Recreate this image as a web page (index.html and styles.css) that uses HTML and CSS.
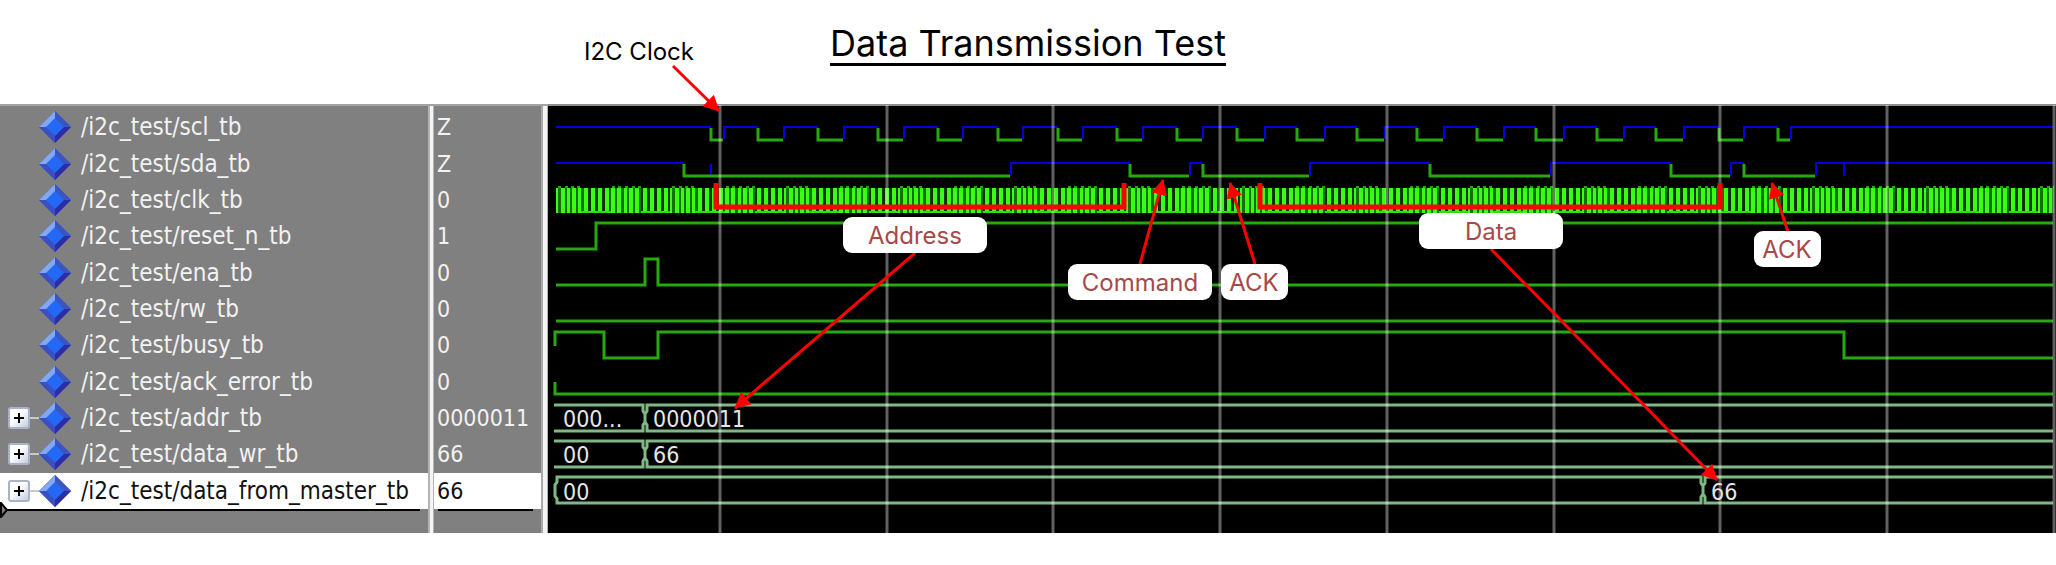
FILE: index.html
```html
<!DOCTYPE html>
<html lang="en">
<head>
<meta charset="utf-8">
<title>Data Transmission Test</title>
<link rel="stylesheet" href="styles.css">
</head>
<body>
<svg class="defs" width="0" height="0" aria-hidden="true">
  <symbol id="gem" viewBox="0 0 32 32">
    <path fill="#3b57c8" d="M16 0 32 16 16 32 0 16Z"/>
    <path fill="#82a8f4" d="M16 0V8L8 16H0Z"/>
    <path fill="#3a55bf" d="M16 0 32 16H24L16 8Z"/>
    <path fill="#3a4fc0" d="M0 16H8L16 24V32Z"/>
    <path fill="#2c2ca4" d="M32 16H24L16 24V32Z"/>
    <path fill="#2468f6" d="M16 7 25 16 16 25 7 16Z"/>
  </symbol>
</svg>
<header class="header"><h1 class="title">Data Transmission Test</h1></header>
<main class="viewer">
  <section class="signals">
    <table class="signal-table">
      <tbody>
        <tr><td class="name"><div class="cell"><span class="tree"></span><svg class="gem"><use href="#gem"/></svg><span>/i2c_test/scl_tb</span></div></td><td class="value">Z</td></tr>
        <tr><td class="name"><div class="cell"><span class="tree"></span><svg class="gem"><use href="#gem"/></svg><span>/i2c_test/sda_tb</span></div></td><td class="value">Z</td></tr>
        <tr><td class="name"><div class="cell"><span class="tree"></span><svg class="gem"><use href="#gem"/></svg><span>/i2c_test/clk_tb</span></div></td><td class="value">0</td></tr>
        <tr><td class="name"><div class="cell"><span class="tree"></span><svg class="gem"><use href="#gem"/></svg><span>/i2c_test/reset_n_tb</span></div></td><td class="value">1</td></tr>
        <tr><td class="name"><div class="cell"><span class="tree"></span><svg class="gem"><use href="#gem"/></svg><span>/i2c_test/ena_tb</span></div></td><td class="value">0</td></tr>
        <tr><td class="name"><div class="cell"><span class="tree"></span><svg class="gem"><use href="#gem"/></svg><span>/i2c_test/rw_tb</span></div></td><td class="value">0</td></tr>
        <tr><td class="name"><div class="cell"><span class="tree"></span><svg class="gem"><use href="#gem"/></svg><span>/i2c_test/busy_tb</span></div></td><td class="value">0</td></tr>
        <tr><td class="name"><div class="cell"><span class="tree"></span><svg class="gem"><use href="#gem"/></svg><span>/i2c_test/ack_error_tb</span></div></td><td class="value">0</td></tr>
        <tr><td class="name"><div class="cell"><span class="tree"><button class="expand" aria-label="Expand addr_tb"></button></span><svg class="gem"><use href="#gem"/></svg><span>/i2c_test/addr_tb</span></div></td><td class="value">0000011</td></tr>
        <tr><td class="name"><div class="cell"><span class="tree"><button class="expand" aria-label="Expand data_wr_tb"></button></span><svg class="gem"><use href="#gem"/></svg><span>/i2c_test/data_wr_tb</span></div></td><td class="value">66</td></tr>
        <tr class="selected"><td class="name"><div class="cell"><span class="tree"><button class="expand" aria-label="Expand data_from_master_tb"></button></span><svg class="gem"><use href="#gem"/></svg><span>/i2c_test/data_from_master_tb</span></div></td><td class="value">66</td></tr>
      </tbody>
    </table>
    <div class="insertion">
      <svg class="marker" viewBox="0 0 8 16"><path d="M1 1 7 8 1 15Z"/></svg>
      <span class="rule rule-name"></span><span class="rule rule-value"></span>
    </div>
  </section>
  <section class="wave">
    <svg class="plot" viewBox="548 104 1508 429">
      <defs>
        <pattern id="clock" x="556" y="184" width="114" height="30" patternUnits="userSpaceOnUse">
          <path fill="#176e09" d="M0 4H28V29H0ZM54 4H85V29H54Z"/>
          <path fill="#093303" d="M28 4H54V29H28ZM85 4H114V29H85Z"/>
          <path fill="#38ff14" d="M0 4h2v25h-2zM5 4h4v25h-4zM11 4h3v25h-3zM16 4h4v25h-4zM22 4h3v25h-3zM28 4h4v25h-4zM35 4h4v25h-4zM42 4h4v25h-4zM49 4h4v25h-4zM55 4h4v25h-4zM61 4h4v25h-4zM68 4h3v25h-3zM73 4h4v25h-4zM79 4h4v25h-4zM87 4h4v25h-4zM94 4h4v25h-4zM101 4h4v25h-4zM108 4h4v25h-4z"/>
          <path fill="#22a50d" d="M2 2h3v2h-3zM9 2h3v2h-3zM15 2h3v2h-3zM21 2h3v2h-3zM56 2h3v2h-3zM62 2h3v2h-3zM69 2h3v2h-3zM76 2h3v2h-3zM82 2h3v2h-3z"/>
          <path fill="#2ee010" d="M25 27H55V29H25ZM85 27H114V29H85Z"/>
        </pattern>
        <marker id="head" viewBox="0 0 16 16" refX="15" refY="8" markerWidth="16" markerHeight="17" markerUnits="userSpaceOnUse" orient="auto"><path fill="#f00" d="M0 0 16 8 0 16Z"/></marker>
      </defs>
      <path class="frame" d="M548 105H2056"/>
      <g class="high">
        <path d="M556 127H711M724 139V127H758M784 139V127H818M844 139V127H878M904 139V127H938M963 139V127H998M1023 139V127H1058M1083 139V127H1117M1143 139V127H1177M1203 139V127H1237M1265 139V127H1297M1325 139V127H1357M1385 139V127H1417M1444 139V127H1477M1504 139V127H1536M1564 139V127H1597M1624 139V127H1656M1684 139V127H1719M1744 139V127H1778M1791 139V127H2053"/>
        <path d="M556 163H684M711 164V176M1011 176V163H1130M1190 176V163H1203M1310 176V163H1430M1551 176V163H1671M1731 176V163H1744M1816 176V163H2053M1844 163V176"/>
      </g>
      <g class="low">
        <path d="M711 128V140H723M758 128V140H783M818 128V140H843M878 128V140H903M938 128V140H962M998 128V140H1022M1058 128V140H1082M1117 128V140H1142M1177 128V140H1202M1237 128V140H1264M1297 128V140H1324M1357 128V140H1384M1417 128V140H1443M1477 128V140H1503M1536 128V140H1563M1597 128V140H1623M1656 128V140H1683M1719 128V140H1743M1778 128V140H1790"/>
        <path d="M684 164V176H1010M1130 164V176H1189M1203 164V176H1309M1430 164V176H1550M1671 164V176H1730M1744 164V176H1815"/>
        <path d="M556 249H596V223H2053"/>
        <path d="M556 285H645V259H658V285H2053"/>
        <path d="M556 321H2053"/>
        <path d="M555 346V332H604V358H658V332H1844V358H2053"/>
        <path d="M555 382V394H2053"/>
      </g>
      <rect x="556" y="184" width="1498" height="30" fill="url(#clock)"/>
      <g class="bus">
        <path d="M554 405H643V411L645 414V422L643 425V431H554M2053 405H647V411L645 414V422L647 425V431H2053"/>
        <path d="M554 441H643V447L645 450V458L643 461V467H554M2053 441H647V447L645 450V458L647 461V467H2053"/>
        <path d="M557 477V482L555 485V496L557 499V503H1701V497L1703 494V486L1701 483V477ZM2053 477H1705V483L1703 486V494L1705 497V503H2053"/>
      </g>
      <path class="grid" d="M720 105V533M887 105V533M1053 105V533M1220 105V533M1387 105V533M1554 105V533M1720 105V533M1887 105V533M2054 105V533"/>
      <g class="bus-text">
        <text x="563" y="427">000...</text><text x="653" y="427">0000011</text>
        <text x="563" y="463">00</text><text x="653" y="463">66</text>
        <text x="563" y="500">00</text><text x="1711" y="500">66</text>
      </g>
      <path class="bracket" d="M716 183V207H1124V183M1260 183V207H1720V183"/>
      <g class="arrows">
        <path d="M673 66 719 111"/>
        <path d="M915 253 735 408"/>
        <path d="M1140 264 1163 180"/>
        <path d="M1255 264 1230 183"/>
        <path d="M1491 249 1717 480"/>
        <path d="M1788 232 1772 183"/>
      </g>
      <g class="tags">
        <rect x="843" y="217" width="144" height="36" rx="9"/><text x="915" y="244">Address</text>
        <rect x="1068" y="264" width="144" height="36" rx="9"/><text x="1140" y="291">Command</text>
        <rect x="1221" y="264" width="67" height="36" rx="9"/><text x="1254" y="291">ACK</text>
        <rect x="1419" y="213" width="144" height="36" rx="9"/><text x="1491" y="240">Data</text>
        <rect x="1754" y="231" width="67" height="36" rx="9"/><text x="1787" y="258">ACK</text>
      </g>
      <text class="clock-label" x="639" y="60">I2C Clock</text>
    </svg>
  </section>
</main>
</body>
</html>
```
FILE: styles.css
```css
* { box-sizing: border-box; }
body { margin: 0; background: #fff; font-family: Inter, sans-serif; }
.defs { position: absolute; }
.header { height: 104px; padding-top: 23px; text-align: center; }
.title {
  display: inline-block;
  margin: 0;
  border-bottom: 3px solid #000;
  color: #000;
  font-size: 36px;
  font-weight: 400;
  line-height: 40px;
}
.viewer { display: grid; grid-template-columns: 548px 1fr; }
.signals {
  padding-top: 3px;
  border-top: 2px solid #a3a3a3;
  background: linear-gradient(90deg,
    #808080 428px, #b4b4b4 428px 430px, #f4f4f4 430px 433px, #b4b4b4 433px 434px,
    #808080 434px 541px, #aaa 541px 543px, #f4f4f4 543px 547px, #b4b4b4 547px);
  color: #f2f2f2;
  font-family: "DejaVu Sans Condensed", "DejaVu Sans", sans-serif;
  line-height: 32px;
}
.signal-table { width: 541px; height: 400px; border-collapse: separate; border-spacing: 0; table-layout: fixed; }
.signal-table td { padding: 0; }
.signal-table .name { width: 428px; font-size: 24px; }
.signal-table .value { padding-left: 3px; border-left: 6px solid transparent; background-clip: padding-box; font-size: 23px; }
.cell { display: flex; align-items: center; white-space: nowrap; }
.tree { display: flex; align-items: center; width: 39px; height: 32px; padding-left: 8px; }
.tree:has(.expand)::after { content: ""; flex: 1; height: 2px; background: #c8c8c8; }
.expand {
  position: relative;
  width: 22px;
  height: 22px;
  padding: 0;
  border: 2px solid #a9b2c6;
  border-radius: 3px;
  background: linear-gradient(135deg, #fff 40%, #c3cce0);
}
.expand::before, .expand::after { content: ""; position: absolute; background: #000; }
.expand::before { left: 4px; top: 8px; width: 10px; height: 2px; }
.expand::after { left: 8px; top: 4px; width: 2px; height: 10px; }
.gem { width: 32px; height: 32px; margin-right: 10px; }
.selected td { background-color: #fff; color: #111; }
.insertion { position: relative; display: flex; height: 24px; padding-left: 7px; }
.rule { height: 2px; background: #000; }
.rule-name { width: 413px; }
.rule-value { width: 95px; margin-left: 18px; }
.marker { position: absolute; left: 0; top: -7px; width: 8px; height: 16px; fill: #808080; stroke: #000; stroke-width: 2; }
.wave { background: #000; }
.plot { display: block; width: 100%; overflow: visible; fill: none; }
.frame { stroke: #8c8c8c; stroke-width: 2; }
.high { stroke: #0000e0; stroke-width: 2; }
.low { stroke: #27a80e; stroke-width: 3; }
.bus { stroke: #80b884; stroke-width: 3; }
.grid { stroke: #fff; stroke-opacity: 0.38; stroke-width: 3; }
.bus-text { fill: #e6e6e6; font-family: "DejaVu Sans Condensed", "DejaVu Sans", sans-serif; font-size: 23px; }
.bracket { stroke: #f00; stroke-width: 5; }
.arrows { stroke: #f00; stroke-width: 3; }
.arrows path { marker-end: url(#head); }
.tags rect { fill: #fff; }
.tags text { fill: #a84848; font-size: 24px; text-anchor: middle; }
.clock-label { fill: #000; font-size: 24px; text-anchor: middle; }
```
